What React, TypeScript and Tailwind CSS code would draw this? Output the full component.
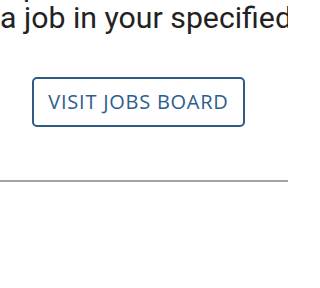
export default function App() {
  return (
    <div className="w-[288px] h-[288px] overflow-hidden bg-white">
      {/* copy block, previous line sits mostly above the fold */}
      <div className="-mt-[30px] text-[30.25px] leading-[32px] text-[#222222] font-['Roboto',sans-serif]">
        <div className="flex justify-end w-[40px] whitespace-nowrap">
          We can help you keep up
        </div>
        <div className="whitespace-nowrap">
          a job in your specified location.
        </div>
      </div>

      <div className="mt-[43px] pl-[32px]">
        <button className="h-[50px] w-[213px] rounded-[5px] border-2 border-[#2f5a86] text-[20px] tracking-[0.75px] text-[#2d5d8c] font-['Open_Sans',sans-serif] uppercase">
          Visit Jobs Board
        </button>
      </div>

      <hr className="mt-[53px] border-0 h-[2px] bg-[#a2a2a2]" />
    </div>
  );
}
